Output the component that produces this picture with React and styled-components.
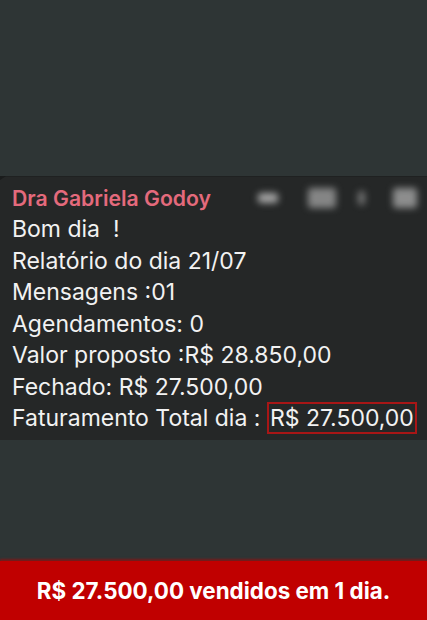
import React from 'react'
import styled, { createGlobalStyle } from 'styled-components'

const Global = createGlobalStyle`
  html, body { margin: 0; padding: 0; }
  body {
    background: #2e3535;
    font-family: Inter, "Noto Sans", sans-serif;
  }
`

const Screen = styled.div`
  width: 427px;
  height: 620px;
  display: flex;
  flex-direction: column;
  background: #2e3535;
  overflow: hidden;
`

const Spacer = styled.div`
  flex: ${p => (p.$h ? `0 0 ${p.$h}px` : 1)};
`

const Bubble = styled.div`
  position: relative;
  background: #252727;
  padding: 4px 4px 5px 12px;
  display: flex;
  flex-direction: column;
  box-shadow: 0 -1px 0 #1f2121;

  &::before {
    content: '';
    position: absolute;
    left: 0;
    top: -1px;
    border-top: 4px solid #1a1c1c;
    border-right: 6px solid transparent;
  }
`

const Header = styled.div`
  display: flex;
  align-items: center;
  justify-content: space-between;
  height: 33px;
`

const Name = styled.div`
  color: #e46a7c;
  font-weight: 600;
  font-size: 21.2px;
`

const Blurs = styled.div`
  display: flex;
  align-items: center;
  padding-right: 6px;
  filter: blur(3.5px);
`

const Blob = styled.div`
  width: ${p => p.$w}px;
  height: ${p => p.$h}px;
  margin-left: ${p => p.$ml || 0}px;
  background: #c4c4c4;
  opacity: ${p => p.$o || 0.8};
  border-radius: 3px;
`

const Line = styled.div`
  color: #f2f2f2;
  font-size: 23px;
  line-height: 31.5px;
  white-space: nowrap;
`

const Boxed = styled.span`
  border: 2px solid #a81616;
  padding: 0 1px;
`

const Banner = styled.div`
  height: 59px;
  background: #c00000;
  display: flex;
  align-items: center;
  justify-content: center;
  color: #fff;
  font-weight: 700;
  font-size: 22.4px;
  box-shadow: 0 -2px 2px rgba(192,0,0,0.5);
`

export default function App () {
  return <Screen>
    <Global />
    <Spacer $h={177} />
    <Bubble>
      <Header>
        <Name>Dra Gabriela Godoy</Name>
        <Blurs>
          <Blob $w={20} $h={10} />
          <Blob $w={28} $h={20} $o={0.6} $ml={30} />
          <Blob $w={7} $h={14} $o={0.5} $ml={22} />
          <Blob $w={24} $h={20} $o={0.65} $ml={28} />
        </Blurs>
      </Header>
      <Line>Bom dia&nbsp; !</Line>
      <Line>Relatório do dia 21/07</Line>
      <Line>Mensagens :01</Line>
      <Line>Agendamentos: 0</Line>
      <Line>Valor proposto :R$ 28.850,00</Line>
      <Line>Fechado: R$ 27.500,00</Line>
      <Line>Faturamento Total dia : <Boxed>R$ 27.500,00</Boxed></Line>
    </Bubble>
    <Spacer />
    <Banner>R$ 27.500,00 vendidos em 1 dia.</Banner>
  </Screen>
}
